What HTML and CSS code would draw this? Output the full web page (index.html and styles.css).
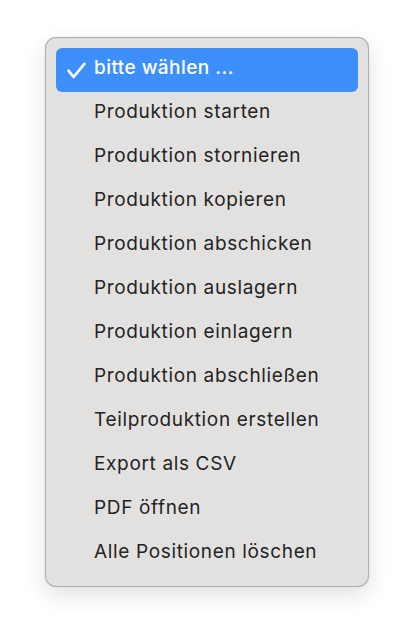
FILE: index.html
```html
<!DOCTYPE html>
<html lang="de">
<head>
<meta charset="utf-8">
<title>Menü</title>
<link rel="stylesheet" href="styles.css">
</head>
<body>
<div class="menu">
  <ul class="list">
    <li class="item selected">
      <svg class="check" viewBox="0 0 20 18" width="20" height="18"><path d="M1.6 8.8 L6.6 15 L17.4 1.9" fill="none" stroke="#fff" stroke-width="2.7" stroke-linecap="round" stroke-linejoin="round"/></svg>
      <span>bitte wählen ...</span>
    </li>
    <li class="item">Produktion starten</li>
    <li class="item">Produktion stornieren</li>
    <li class="item">Produktion kopieren</li>
    <li class="item">Produktion abschicken</li>
    <li class="item">Produktion auslagern</li>
    <li class="item">Produktion einlagern</li>
    <li class="item">Produktion abschließen</li>
    <li class="item">Teilproduktion erstellen</li>
    <li class="item">Export als CSV</li>
    <li class="item">PDF öffnen</li>
    <li class="item">Alle Positionen löschen</li>
  </ul>
</div>
</body>
</html>
```

FILE: styles.css
```css
html, body {
  margin: 0;
  padding: 0;
  background: #ffffff;
}
body {
  width: 414px;
  height: 640px;
  font-family: Inter, "Noto Sans", "Liberation Sans", sans-serif;
  overflow: hidden;
}
.menu {
  box-sizing: border-box;
  margin: 37px 0 0 45px;
  width: 324px;
  height: 550px;
  padding: 10px 10px;
  background: #e3e1df;
  border: 1px solid rgba(0, 0, 0, 0.22);
  border-radius: 11px;
  box-shadow: 0 8px 22px rgba(0, 0, 0, 0.12), 0 0 2px rgba(0, 0, 0, 0.08);
}
.list {
  list-style: none;
  margin: 0;
  padding: 0;
}
.item {
  position: relative;
  display: flex;
  align-items: center;
  height: 44px;
  padding: 0 0 5px 38px;
  box-sizing: border-box;
  border-radius: 6px;
  font-size: 19px;
  color: #242424;
  letter-spacing: 0.65px;
}
.item.selected {
  background: #3d8ffb;
  color: #ffffff;
  font-weight: 500;
  letter-spacing: 0.45px;
}
.check {
  position: absolute;
  left: 11px;
  top: 14px;
}
```
